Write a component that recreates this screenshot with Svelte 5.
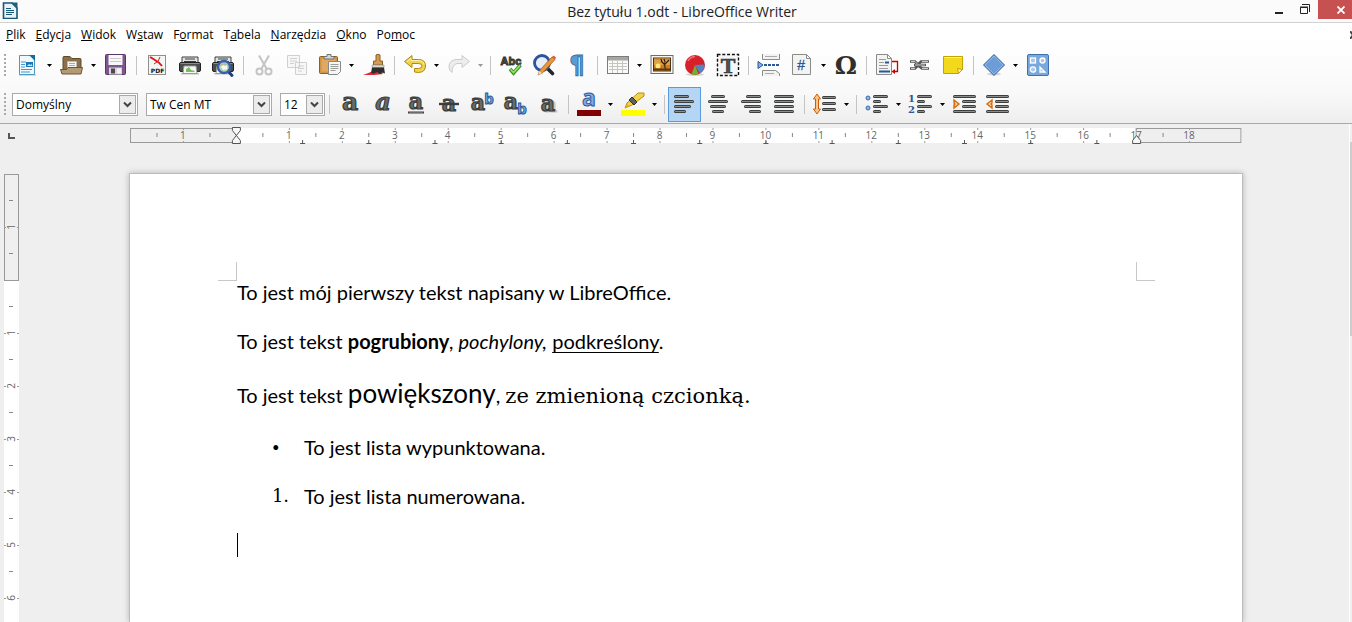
<script>
  const CM = 53;

  const menu = [
    ['', 'P', 'lik'],
    ['', 'E', 'dycja'],
    ['', 'W', 'idok'],
    ['W', 's', 'taw'],
    ['F', 'o', 'rmat'],
    ['T', 'a', 'bela'],
    ['', 'N', 'arzędzia'],
    ['', 'O', 'kno'],
    ['Po', 'm', 'oc'],
  ];

  const sep = { kind: 'sep' };
  const btn = (icon, label, more = {}) => ({ kind: 'btn', icon, label, ...more });
  const drop = (label, off = false) => ({ kind: 'drop', label, off });

  const standard = [
    btn('new', 'Nowy'), drop('Nowy: więcej'),
    btn('open', 'Otwórz'), drop('Otwórz: więcej'),
    btn('save', 'Zapisz'), sep,
    btn('pdf', 'Eksportuj jako PDF'), btn('print', 'Drukuj'), btn('preview', 'Podgląd wydruku'), sep,
    btn('cut', 'Wytnij', { off: true }), btn('copy', 'Kopiuj', { off: true }),
    btn('paste', 'Wklej'), drop('Wklej: więcej'), btn('brush', 'Klonuj formatowanie'), sep,
    btn('undo', 'Cofnij'), drop('Cofnij: więcej'),
    btn('redo', 'Przywróć', { off: true }), drop('Przywróć: więcej', true), sep,
    btn('spell', 'Pisownia'), btn('find', 'Znajdź i zamień'), btn('pilcrow', 'Znaki niedrukowane'), sep,
    btn('table', 'Tabela'), drop('Tabela: więcej'),
    btn('image', 'Obraz'), btn('chart', 'Wykres'), btn('textbox', 'Pole tekstowe'), sep,
    btn('pagebreak', 'Podział strony'), btn('field', 'Pole'), drop('Pole: więcej'),
    btn('omega', 'Znak specjalny'), sep,
    btn('footnote', 'Przypis dolny'), btn('link', 'Hiperłącze'), btn('note', 'Komentarz'), sep,
    btn('diamond', 'Kształty'), drop('Kształty: więcej'),
    btn('draw', 'Funkcje rysunkowe'),
  ];

  const formatting = [
    sep,
    btn('bold', 'Pogrubienie'), btn('italic', 'Kursywa'), btn('underline', 'Podkreślenie'),
    btn('strike', 'Przekreślenie'), btn('super', 'Indeks górny'), btn('sub', 'Indeks dolny'),
    btn('shadow', 'Cień'), sep,
    btn('color', 'Kolor czcionki'), drop('Kolor czcionki: więcej'),
    btn('marker', 'Wyróżnienie'), drop('Wyróżnienie: więcej'), sep,
    btn('left', 'Do lewej', { on: true }), btn('center', 'Wyśrodkuj'),
    btn('right', 'Do prawej'), btn('justify', 'Wyjustuj'), sep,
    btn('spacing', 'Interlinia'), drop('Interlinia: więcej'), sep,
    btn('bullets', 'Wypunktowanie'), drop('Wypunktowanie: więcej'),
    btn('numbers', 'Numerowanie'), drop('Numerowanie: więcej'),
    btn('indent', 'Zwiększ wcięcie'), btn('outdent', 'Zmniejsz wcięcie'),
  ];

  // A row of text drawn as a rounded bar with a lighter core.
  const bar = (x, y, w) =>
    `<rect x="${x}" y="${y}" width="${w}" height="3" rx="1.5" fill="#3c3f3d"/><rect x="${x + 1}" y="${y + 1}" width="${w - 2}" height="1" fill="#8b8e8c"/>`;
  const bars = (list) => list.map(([x, y, w]) => bar(x, y, w)).join('');
  const letter = (x, y, size, more = '') =>
    `<text x="${x}" y="${y}" font-family="DejaVu Serif, serif" font-weight="bold" font-size="${size}" text-anchor="middle" fill="#686c6a" stroke="#3a3d3b" stroke-width="1.2" ${more}>a</text>`;
  const blue = (ch, x, y, size) =>
    `<text x="${x}" y="${y}" font-family="Open Sans, sans-serif" font-weight="bold" font-size="${size}" text-anchor="middle" fill="#7fabe2" stroke="#2b5797" stroke-width="1">${ch}</text>`;
  const printer = `<path d="M4 4h16v7H4z" fill="#e3e3e1" stroke="#3b3e3c"/><path d="M7 6h10M6 8.500h12" stroke="#3b3e3c"/><rect x="1.500" y="9.500" width="21" height="9" rx="1.500" fill="#4a4d4b" stroke="#202321"/><path d="M2.500 10.500h19" stroke="#8b8e8c"/><path d="M3 20h18v1.500H3z" fill="#888" opacity=".5"/><path d="M6 13h12l1 7.500H5z" fill="#f8f8f6" stroke="#999b99"/><path d="M8 16l3-2 2 3 4 1-1 1H8z" fill="#6fc25c"/>`;
  const page = (x, y, w, h) =>
    `<path d="M${x} ${y}h${w - 4}l4 4v${h - 4}h-${w}z" fill="#f3f3f1" stroke="#8a8c8a"/><path d="M${x + w - 4} ${y}v4h4z" fill="#fff" stroke="#8a8c8a"/>`;

  const icons = {
    new: `<rect x="3" y="21" width="17" height="2" fill="#999" opacity=".35"/><path d="M3.500 2.500h11l4 4v15h-15z" fill="#f1f8fb" stroke="#4c98c0"/><path d="M13 2h6v6z" fill="#156a9f"/><path d="M5 9h5M5 11.500h4M5 14h4M5 16.500h11M5 19h9" stroke="#3f9ad0" stroke-width="1.200"/><rect x="10" y="9" width="7" height="5" fill="#1f78b4"/><path d="M11 13l2-2 1.500 1 1-1 1 2z" fill="#cde8f5"/>`,
    open: `<path d="M3 18V4.500q0-1 1-1h6l2 2h8q1 0 1 1V18z" fill="#8a6f49" stroke="#5f4a2c"/><path d="M7.500 8.500h9v9h-9z" fill="#f6f6f4" stroke="#bbb"/><path d="M9 10.500h6M9 12.500h6" stroke="#aaa"/><path d="M0.500 16.500h6l1.500-2h14.500l-1.500 6.500H2z" fill="#b39a74" stroke="#6d5636"/>`,
    save: `<rect x="1.500" y="1.500" width="20" height="20" rx="1" fill="#7c568d" stroke="#573669"/><rect x="4.500" y="2" width="14" height="10" fill="#f7f7f7"/><path d="M6 5.500h11M6 8.500h11" stroke="#cbcbcb"/><rect x="5" y="14.500" width="13" height="7" fill="#d6d6d6"/><rect x="7" y="15.500" width="4" height="5" fill="#4b4b4b"/><path d="M13 15.500h4v5h-4z" fill="#f2f2f2"/>`,
    pdf: `<rect x="3.500" y="2.500" width="17" height="19" fill="#f5f5f3" stroke="#8e908e"/><path d="M5 4l5 3q4 2 7 6" fill="none" stroke="#d8161d" stroke-width="1.800"/><path d="M15 4q-1 5-6 7M6 4l6 5" fill="none" stroke="#d8161d" stroke-width="1"/><text x="12.500" y="20" font-family="DejaVu Sans, sans-serif" font-size="6" font-weight="bold" text-anchor="middle" fill="#111">PDF</text>`,
    print: printer,
    preview: printer + `<path d="M17 18l4 4.500" stroke="#23407c" stroke-width="3" stroke-linecap="round"/><circle cx="13" cy="14" r="6" fill="#bcd6ae" fill-opacity=".85" stroke="#3560b0" stroke-width="2.400"/><path d="M10 14l2-2 2 1 2-1v4l-4 1z" fill="#f5faf3"/>`,
    cut: `<g fill="none" stroke="#c4c4c4" stroke-width="2"><path d="M7 2.500l7.500 13M17 2.500l-7.500 13"/><circle cx="7.500" cy="18.500" r="3"/><circle cx="16.500" cy="18.500" r="3"/></g>`,
    copy: `<g fill="#f7f7f7" stroke="#d0d0d0"><path d="M2.500 2.500h12v12h-12zM10.500 9.500h11v12h-11z"/><path d="M5 5.500h7M5 8h7M5 10.500h4M13 13h6M13 15.500h6M13 18h4"/></g>`,
    paste: `<rect x="1.500" y="3.500" width="18" height="17" rx="1" fill="#cf9346" stroke="#8f5f22"/><rect x="3.500" y="5.500" width="14" height="13" fill="#e0a95f"/><path d="M6 6V3.500h3V1.500h4v2h3V6z" fill="#d7d7d5" stroke="#6f716f"/><path d="M10.500 8.500h12v10l-3 3h-9z" fill="#f6f6f4" stroke="#868886"/><path d="M12.500 11.500h8M12.500 13.500h8M12.500 15.500h8M12.500 17.500h5" stroke="#9a9c9a"/>`,
    brush: `<path d="M1 22c4-1 7-3 10-4h8l2 3c-5 1-12 1-20 1z" fill="#dd2a3a"/><path d="M14 2q2-1.500 4 0v6h2.500v4h-9V8H14z" fill="#d59a50" stroke="#8d5d20"/><path d="M10 12h12v2.500H10z" fill="#d8d8d6" stroke="#8a8c8a" stroke-width=".6"/><path d="M10 14.500h12l1 6-3-1-2 1.500-3-2-3 1.500-3-.5z" fill="#2c2f2d"/>`,
    undo: `<path d="M1.500 8.500L9 2.500v4h6.500q7 0 7 6.500 0 6-7 6.500l-4-.5v-3.500h4q3.500 0 3.500-2.500t-3.500-2.500H9v4z" fill="#f0d44c" stroke="#b08a08" stroke-linejoin="round"/><path d="M4 8.500l4-3v2h7.500q5 .5 5.500 4" fill="none" stroke="#fbf0ac"/>`,
    redo: `<path d="M22.500 8.500L15 2.500v4H9q-7 1-7 7.500 0 3.500 3 5.500 0-8 5-9h5v4z" fill="#ededed" stroke="#cbcbcb" stroke-linejoin="round"/>`,
    spell: `<text x="12" y="12" font-family="Liberation Sans, sans-serif" font-size="11" font-weight="bold" text-anchor="middle" fill="#616462" stroke="#2c2f2d" stroke-width=".9">Abc</text><path d="M11 16l3.500 4L21.500 12" fill="none" stroke="#39931a" stroke-width="3.600"/><path d="M11.500 16.500l3 3L21 12.500" fill="none" stroke="#9be46e" stroke-width="1.600"/>`,
    find: `<path d="M15.500 15.500l5 5" stroke="#23272e" stroke-width="3.600" stroke-linecap="round"/><circle cx="10" cy="10" r="7.500" fill="#e6eefa" stroke="#2b539f" stroke-width="2.800"/><path d="M6 22l2-5L20 4l3 2.500L11 19.500z" fill="#e9973c" stroke="#a15c12" stroke-width=".8"/><path d="M20 4l1.500-1.500 2.500 2L23 6.500z" fill="#e05555"/><path d="M6 22l1.500-4 2.500 2z" fill="#f2dcb8"/>`,
    pilcrow: `<text x="12" y="20" font-family="DejaVu Sans, sans-serif" font-size="24" font-weight="bold" text-anchor="middle" fill="#5b9bd5" stroke="#35709f" stroke-width=".9">¶</text>`,
    table: `<rect x="1.500" y="3.500" width="21" height="17" fill="#fafaf8" stroke="#7b7d7b"/><path d="M2 4h20v3.500H2z" fill="#a5a7a5"/><path d="M3 10.500h18M3 13.500h18M3 16.500h18M6.500 8v12M11.500 8v12M16.500 8v12" stroke="#c2c4c2"/>`,
    image: `<rect x="1" y="2.500" width="22" height="18" fill="#f5f5f3" stroke="#6c6e6c"/><rect x="3.500" y="5" width="17" height="13" fill="#e0a048" stroke="#4b3518"/><path d="M4 12h16v4H4z" fill="#cf7a22"/><path d="M4 5.500h16V7H4z" fill="#c98f3c"/><circle cx="8" cy="13" r="2.500" fill="#ffe97b"/><path d="M16 17.500q-2-5-1-8M15 12l-4-4M15 11l4-4M15 9l-1-3M12 9l-1-3" stroke="#2b1a08" stroke-width="1.100" fill="none"/><path d="M4 15.500h16v2H4z" fill="#5e370c"/>`,
    chart: `<ellipse cx="12" cy="21.500" rx="9" ry="1.500" fill="#999" opacity=".4"/><circle cx="12" cy="12" r="10" fill="#d8202a"/><path d="M12 12l9.500-.5q.5 5-4.500 9z" fill="#5285c4"/><path d="M12 12l3.500 9q-4 1.500-7 .3z" fill="#6ab52c"/><path d="M5 8q2-4 7-4.500" stroke="#f07076" fill="none" stroke-width="1.500"/>`,
    textbox: `<rect x="1.500" y="1.500" width="21" height="21" fill="#f6f6f6" stroke="#111" stroke-width="1.400" stroke-dasharray="3 1.800"/><text x="12" y="19.500" font-family="Liberation Serif, serif" font-size="22" font-weight="bold" text-anchor="middle" fill="#4e514f" stroke="#2d302e" stroke-width=".6">T</text>`,
    pagebreak: `<path d="M5.500 1v5.500h17V1M5.500 23v-5.500h13l4 3V23" fill="#f3f3f1" stroke="#8a8c8a"/><path d="M8 3.500h12M8 20.500h9" stroke="#aaacaa"/><path d="M1 8.500l5 3.500-5 3.500z" fill="#7fb0e4" stroke="#2b5797"/><path d="M7 12h16" stroke="#2b5797" stroke-width="2" stroke-dasharray="3 1"/>`,
    field: page(2.5, 1.5, 18, 20) + `<text x="11" y="17" font-family="Liberation Sans, sans-serif" font-size="14" font-style="italic" text-anchor="middle" fill="#2b5797" stroke="#2b5797" stroke-width=".3">#</text>`,
    omega: `<text x="12" y="21" font-family="DejaVu Serif, serif" font-size="25" font-weight="bold" text-anchor="middle" fill="#2c302e">Ω</text>`,
    footnote: page(1.5, 1.5, 15, 20) + `<path d="M4 6.500h7M4 9.500h5M4 12.500h9M4 15.500h9" stroke="#9a9c9a"/><path d="M10 9.500h4M4 18.500h11" stroke="#2b5797" stroke-width="2"/><path d="M17 8.500h5.500v10H19" fill="none" stroke="#cc0000" stroke-width="1.300"/><path d="M20 16l-3.500 2.500L20 21z" fill="#cc0000"/>`,
    link: `<path d="M2 8.500h5l3 3 3-3h8M2 15.500h5l3-3 4 3h7M6 12h12" fill="none" stroke="#555856" stroke-width="2.600"/><path d="M3 8.500h4l3 3M14 8.500h6M3 15.500h4M14 15.500h6M7 12h10" fill="none" stroke="#c9cbc9"/>`,
    note: `<path d="M2.500 3.500h19v13l-4 4h-15z" fill="#f2d91c" stroke="#c2a300"/><path d="M21.500 16.500l-5-1 1 5z" fill="#fdf6b0" stroke="#c2a300"/><path d="M3.500 4.500h17" stroke="#faf0a0"/>`,
    diamond: `<ellipse cx="12" cy="21" rx="7" ry="1.500" fill="#999" opacity=".4"/><path d="M12 1.500L22.500 12 12 22.500 1.500 12z" fill="#6c9dd6" stroke="#35629f"/><path d="M12 3L21 12 12 21 3 12z" fill="none" stroke="#93b9e5"/>`,
    draw: `<rect x="1.500" y="1.500" width="21" height="21" rx="1.500" fill="#7aa7dc" stroke="#426fae"/><g fill="#a9c8ec" stroke="#fff" stroke-width="1.300"><rect x="4.500" y="5" width="5" height="5"/><circle cx="16.500" cy="7.500" r="2.500"/><circle cx="7" cy="16.500" r="2.700"/><path d="M14 14v5h5z"/></g>`,
    bold: letter(12, 18, 25),
    italic: letter(12, 18, 24, 'font-style="italic"'),
    underline: letter(12, 17, 22) + `<path d="M4 20.500h16" stroke="#3a3d3b" stroke-width="2"/><path d="M5 20.500h14" stroke="#8b8e8c" stroke-width=".6"/>`,
    strike: letter(12, 19, 22) + `<path d="M2 12h20" stroke="#3a3d3b" stroke-width="2.400"/>`,
    super: letter(8, 18, 22) + blue('b', 19, 12, 15),
    sub: letter(8, 17, 22) + blue('b', 19, 22, 15),
    shadow: `<g opacity=".25">${letter(14, 20, 22)}</g>` + letter(12, 19, 22),
    color: blue('a', 12, 14, 23) + `<path d="M0 18h24v6H0z" fill="#800000"/>`,
    marker: `<path d="M4 16l2-5L17 1h6v3L11 13z" fill="#f1d34b" stroke="#b58e12"/><path d="M8 8l5 5 3-3-5-5z" fill="#5d605e" stroke="#2e312f"/><path d="M4 16l2-4 2.500 2z" fill="#e6b800"/><path d="M0 18h24v6H0z" fill="#ffff00"/>`,
    left: bars([[1, 3, 15], [1, 8, 20], [1, 13, 17], [1, 18, 12]]),
    center: bars([[5, 3, 14], [2, 8, 20], [4, 13, 16], [6, 18, 12]]),
    right: bars([[7, 3, 15], [2, 8, 20], [5, 13, 17], [10, 18, 12]]),
    justify: bars([[2, 3, 20], [2, 8, 20], [2, 13, 20], [2, 18, 20]]),
    spacing: bars([[9, 4, 14], [9, 10, 14], [9, 16, 14]]) + `<path d="M4 2L7.500 7H5.500v10h2L4 22 .5 17h2V7h-2z" fill="#f7c68d" stroke="#ce5c00" stroke-linejoin="round"/>`,
    bullets: bars([[8, 3, 15], [8, 8, 8], [8, 13, 15], [8, 18, 8]]) + `<g fill="#8fb5e2" stroke="#3a6cab"><circle cx="3" cy="6" r="2"/><circle cx="3" cy="16" r="2"/></g>`,
    numbers: bars([[8, 3, 15], [8, 8, 8], [8, 13, 15], [8, 18, 8]]) + `<g font-family="DejaVu Serif, serif" font-size="10" font-weight="bold" text-anchor="middle" fill="#2b5797"><text x="2.500" y="10">1</text><text x="2.500" y="21">2</text></g>`,
    indent: bars([[0, 3, 23], [9, 8, 14], [9, 13, 14], [0, 18, 23]]) + `<path d="M1 8l5 4-5 4V13l1-1-1-1z" fill="#fbd9a8" stroke="#d56a0c" stroke-width="1.400"/>`,
    outdent: bars([[0, 3, 23], [9, 8, 14], [9, 13, 14], [0, 18, 23]]) + `<path d="M6 8l-5 4 5 4V13l-1-1 1-1z" fill="#fbd9a8" stroke="#d56a0c" stroke-width="1.400"/>`,
  };

  // The sheet is 21 cm wide with 2 cm margins; positions are shares of its width.
  const share = (cm) => `${(cm / 21) * 100}%`;
  const whole = Array.from({ length: 20 }, (_, i) => i + 1).filter((cm) => cm !== 2);
  const halves = Array.from({ length: 20 }, (_, i) => i + 0.5);
  const tabs = Array.from({ length: 13 }, (_, i) => 2 + (i + 1) * 1.25);
  const down = [1, 2, 3, 4, 5, 6];

  const combos = [
    { label: 'Styl akapitu', value: 'Domyślny', size: 'wide' },
    { label: 'Nazwa czcionki', value: 'Tw Cen MT', size: 'wide' },
    { label: 'Rozmiar czcionki', value: '12', size: 'small' },
  ];
</script>

{#snippet tool(item)}
  {#if item.kind === 'sep'}
    <span class="sep"></span>
  {:else if item.kind === 'drop'}
    <button class="drop" class:off={item.off} aria-label={item.label} disabled={item.off}>
      <svg width="5" height="3" viewBox="0 0 5 3"><path d="M0 0h5L2.500 3z" fill="currentColor" /></svg>
    </button>
  {:else}
    <button class="tool" class:on={item.on} aria-label={item.label} disabled={item.off}>
      <svg width="24" height="24" viewBox="0 0 24 24">{@html icons[item.icon]}</svg>
    </button>
  {/if}
{/snippet}

<div class="app">
  <header>
    <div class="titlebar">
      <svg class="logo" width="16" height="17" viewBox="0 0 16 17">
        <path d="M1.500 1h8.500l5 5v10.500h-13.500z" fill="#e8f3f8" stroke="#1b5675" stroke-width="1.600" />
        <path d="M9 .5h6.500V7z" fill="#1f5f86" />
        <path d="M4 6.500h5M4 8.500h8M4 10.500h8M4 12.500h6" stroke="#1b5675" />
      </svg>
      <h1>Bez tytułu 1.odt - LibreOffice Writer</h1>
      <div class="controls">
        <button aria-label="Minimalizuj"><svg width="10" height="12" viewBox="0 0 10 12"><path d="M1 8h8v2H1z" fill="#222" /></svg></button>
        <button aria-label="Przywróć w dół"><svg width="10" height="12" viewBox="0 0 10 12"><path d="M.5 3.500h7v6h-7zM0 3h8" fill="none" stroke="#222" /><path d="M2 .5h7.500V8" fill="none" stroke="#222" /></svg></button>
        <button class="close" aria-label="Zamknij"><svg width="8" height="8" viewBox="0 0 8 8"><path d="M.5.5l7 7M7.500.5l-7 7" stroke="#fff" stroke-width="1.800" /></svg></button>
      </div>
    </div>

    <nav>
      {#each menu as [before, key, after]}
        <button>{before}<u>{key}</u>{after}</button>
      {/each}
      <svg class="doc-close" width="2" height="8" viewBox="0 0 2 8"><path d="M0 0l3 4-3 4" fill="none" stroke="#444" stroke-width="2" /></svg>
    </nav>

    <div class="bar standard">
      <span class="grip"></span>
      {#each standard as item}{@render tool(item)}{/each}
    </div>

    <div class="bar formatting">
      <span class="grip"></span>
      <div class="combos">
        {#each combos as c}
          <div class="combo {c.size}">
            <select aria-label={c.label}><option>{c.value}</option></select>
            <span class="chevron"><svg width="9" height="7" viewBox="0 0 9 7"><path d="M1 1.500l3.500 3.500L8 1.500" fill="none" stroke="#444" stroke-width="2" /></svg></span>
          </div>
        {/each}
      </div>
      {#each formatting as item}{@render tool(item)}{/each}
    </div>
  </header>

  <main>
    <div class="corner"><svg width="7" height="6" viewBox="0 0 7 6"><path d="M1 0v5h6" fill="none" stroke="#555" stroke-width="2" /></svg></div>

    <svg class="ruler" width="100%" height="20">
      <rect x="0" y="3" width="100%" height="15" fill="#fff" />
      <g fill="#efefef" stroke="#999">
        <rect x=".5" y="3.500" width={share(2)} height="14" />
        <rect x={share(19)} y="3.500" width={share(1.98)} height="14" />
      </g>
      {#each halves as cm}
        <rect x={share(cm)} y="8" width="1" height="4" fill="#888" />
      {/each}
      {#each whole as cm}
        <rect x={share(cm)} y="3" width="1" height="2" fill="#999" />
        <rect x={share(cm)} y="16" width="1" height="2" fill="#999" />
        <text x={share(cm)} y="14">{Math.abs(cm - 2)}</text>
      {/each}
      {#each tabs as cm}
        <svg x={share(cm)} y="15" overflow="visible"><path d="M.5 0v3M-2 3.500h5" stroke="#555" fill="none" /></svg>
      {/each}
      <svg x={share(2)} y="2" overflow="visible">
        <path d="M-3.500.5h8v3l-4 5-4-5zM-3.500 16.500h8v-3l-4-5-4 5z" fill="#f7f7f7" stroke="#555" />
      </svg>
      <svg x={share(19)} y="2" overflow="visible">
        <path d="M-3.500 16.500h8v-3l-4-5-4 5z" fill="#f7f7f7" stroke="#555" />
      </svg>
    </svg>

    <svg class="side" width="15" height="100%">
      <rect width="15" height="100%" fill="#fff" />
      <rect x=".5" y=".5" width="14" height={2 * CM} fill="#efefef" stroke="#999" />
      {#each [0.5, 1.5, ...down.map((n) => n + 1.5)] as cm}
        <rect x="5" y={Math.floor(cm * CM)} width="4" height="1" fill="#888" />
      {/each}
      {#each [1, ...down.map((n) => n + 2)] as cm}
        <rect x="0" y={cm * CM} width="2" height="1" fill="#999" />
        <rect x="13" y={cm * CM} width="2" height="1" fill="#999" />
        <text transform="translate(11 {cm * CM}) rotate(-90)">{Math.abs(cm - 2)}</text>
      {/each}
    </svg>

    <article>
      <div class="crops"><i></i><i></i></div>
      <div class="text" contenteditable="true" role="textbox" aria-label="Treść dokumentu" tabindex="0" spellcheck="false">
        <p>To jest mój pierwszy tekst napisany w LibreOffice.</p>
        <p>To jest tekst <b>pogrubiony</b><em>, pochylony,</em>{' '}<u>podkreślony</u>.</p>
        <p class="mixed">To jest tekst <span class="big">powiększony</span>, <span class="serif">ze zmienioną czcionką.</span></p>
        <ul><li><span class="dot">•</span>To jest lista wypunktowana.</li></ul>
        <ol><li><span class="number">1.</span>To jest lista numerowana.</li></ol>
        <p class="caret"><span></span></p>
      </div>
    </article>

    <div class="scroll"><span></span></div>
  </main>
</div>

<style>
  :global(body) {
    overflow: hidden;
  }
  .app {
    height: 100vh;
    display: flex;
    flex-direction: column;
    overflow: hidden;
    background: #efefef;
    color: #000;
    font-family: 'Open Sans', 'Noto Sans', sans-serif;
    font-size: 12px;
  }
  button {
    margin: 0;
    padding: 0;
    border: 0;
    background: none;
    font: inherit;
    color: inherit;
    display: flex;
    align-items: center;
    justify-content: center;
  }
  svg {
    display: block;
    flex: none;
  }
  header {
    flex: none;
    border-bottom: 1px solid #a9a9a9;
    background: linear-gradient(#fff 30%, #f9f9f9 75%, #eee);
  }

  .titlebar {
    display: grid;
    grid-template-columns: 86px 1fr 86px;
    height: 22px;
    background: #fbfbfb;
    border-bottom: 1px solid #d2d2d2;
  }
  .logo {
    margin: 2px 0 0 2px;
  }
  h1 {
    margin: 0;
    padding-left: 12px;
    font-size: 14px;
    line-height: 23px;
    font-weight: 400;
    text-align: center;
    white-space: nowrap;
    color: #222;
  }
  .controls {
    display: grid;
    grid-template-columns: 1fr 1fr 34px;
    height: 19px;
  }
  .controls .close {
    background: #c75050;
    padding-left: 12px;
  }

  nav {
    display: flex;
    align-items: center;
    gap: 10px;
    height: 24px;
    padding-left: 6px;
  }
  nav button {
    line-height: 16px;
  }
  .doc-close {
    margin-left: auto;
  }

  .bar {
    display: flex;
    align-items: center;
    padding-left: 4px;
  }
  .standard {
    height: 36px;
  }
  .formatting {
    height: 38px;
    padding-top: 2px;
  }
  .grip {
    width: 2px;
    height: 22px;
    margin-right: 5px;
    background: repeating-linear-gradient(#aaa 0 2px, transparent 2px 4px);
  }
  .formatting .grip {
    margin-right: 6px;
  }
  .tool {
    width: 33px;
    height: 35px;
    flex: none;
    box-sizing: border-box;
  }
  .tool svg {
    overflow: visible;
  }
  .tool.on {
    background: #b4d5f3;
    border: 1px solid #5c9bd9;
  }
  .drop {
    width: 11px;
    height: 35px;
    flex: none;
  }
  .drop.off {
    color: #999;
  }
  .sep {
    width: 1px;
    height: 19px;
    margin: 0 3px 0 4px;
    background: #c4c4c4;
    flex: none;
  }

  .combos {
    display: flex;
    gap: 8px;
  }
  .combo {
    display: grid;
    grid-template-columns: 1fr 19px;
    box-sizing: border-box;
    height: 23px;
    border: 1px solid #a9a9a9;
    background: #fff;
  }
  .wide {
    width: 126px;
  }
  .small {
    width: 45px;
  }
  .combo select {
    grid-area: 1 / 1 / 2 / 3;
    appearance: none;
    border: 0;
    padding: 0 3px;
    background: none;
    font: inherit;
    color: #000;
  }
  .chevron {
    grid-area: 1 / 2 / 2 / 3;
    margin: 1px;
    border: 1px solid #a9a9a9;
    background: #ececec;
    display: flex;
    align-items: center;
    justify-content: center;
    pointer-events: none;
  }

  main {
    flex: 1;
    min-height: 0;
    display: grid;
    grid-template-columns: 130px 1fr 107px 3px;
    grid-template-rows: 20px 1fr;
    padding-top: 1px;
  }
  .corner {
    padding: 8px 0 0 8px;
  }
  .ruler,
  .side {
    overflow: visible;
  }
  .ruler text,
  .side text {
    font-family: 'Open Sans', sans-serif;
    font-size: 10px;
    text-anchor: middle;
    fill: #666;
  }
  .side {
    grid-area: 2 / 1;
    margin: 29px 0 0 4px;
  }
  article {
    grid-area: 2 / 2;
    margin: 28px -1px 0;
    background: #fff;
    border: 1px solid #bdbdbd;
    border-bottom: 0;
    box-shadow: 0 0 6px rgba(0, 0, 0, 0.25);
    overflow: hidden;
  }
  .scroll {
    grid-area: 1 / 4 / 3 / 5;
    margin-top: -1px;
    border-left: 1px solid #fff;
  }
  .scroll span {
    display: block;
    height: 194px;
    margin-top: 18px;
    background: #cdcdcd;
  }

  .crops {
    display: flex;
    justify-content: space-between;
    padding: 88px calc(200% / 21 - 19px) 0 calc(200% / 21 - 18px);
  }
  .crops i {
    width: 18px;
    height: 18px;
    border: 0 solid #c8c8c8;
    border-bottom-width: 1px;
    border-right-width: 1px;
  }
  .crops i:last-child {
    border-right-width: 0;
    border-left-width: 1px;
  }
  .text {
    margin-top: -1px;
    padding: 0 calc(200% / 21 - 1px) 0 calc(200% / 21 + 1px);
    outline: 0;
    font-family: Lato, 'Open Sans', sans-serif;
    font-size: 20px;
    line-height: 24px;
  }
  .text p,
  .text ul,
  .text ol {
    margin: 0 0 25px;
  }
  .text .mixed {
    line-height: 32px;
    margin: -1px 0 23px;
  }
  .big {
    font-size: 26px;
  }
  .serif {
    font-family: 'DejaVu Serif', serif;
    font-size: 21px;
  }
  .text u {
    text-decoration-thickness: 1px;
    text-underline-offset: 3px;
  }
  .text ul,
  .text ol {
    padding-left: 35px;
    list-style: none;
  }
  li {
    display: grid;
    grid-template-columns: 32px 1fr;
  }
  .dot {
    font-size: 13px;
  }
  .number {
    font-family: 'DejaVu Serif', serif;
    font-size: 18px;
  }
  .caret span {
    display: block;
    width: 1px;
    height: 24px;
    background: #000;
  }
</style>
